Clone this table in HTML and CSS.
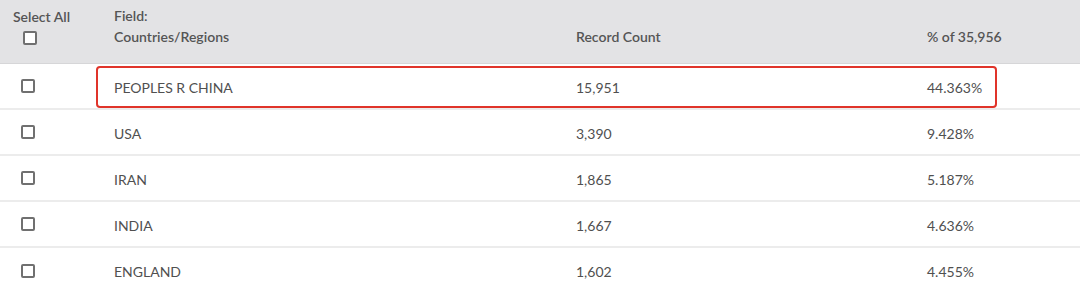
FILE: index.html
```html
<!DOCTYPE html>
<html>
<head>
<meta charset="utf-8">
<link rel="stylesheet" href="styles.css">
</head>
<body>
<div class="table">
  <div class="head">
    <div class="sel">
      <span class="sel-label">Select All</span>
      <span class="box head-box"></span>
    </div>
    <div class="main">
      <div class="c field"><span>Field:</span><span>Countries/Regions</span></div>
      <div class="c count">Record Count</div>
      <div class="c pct">% of 35,956</div>
    </div>
  </div>
  <div class="row">
    <div class="sel"><span class="box"></span></div>
    <div class="main hl">
      <div class="c field">PEOPLES R CHINA</div>
      <div class="c count">15,951</div>
      <div class="c pct">44.363%</div>
    </div>
  </div>
  <div class="row">
    <div class="sel"><span class="box"></span></div>
    <div class="main">
      <div class="c field">USA</div>
      <div class="c count">3,390</div>
      <div class="c pct">9.428%</div>
    </div>
  </div>
  <div class="row">
    <div class="sel"><span class="box"></span></div>
    <div class="main">
      <div class="c field">IRAN</div>
      <div class="c count">1,865</div>
      <div class="c pct">5.187%</div>
    </div>
  </div>
  <div class="row">
    <div class="sel"><span class="box"></span></div>
    <div class="main">
      <div class="c field">INDIA</div>
      <div class="c count">1,667</div>
      <div class="c pct">4.636%</div>
    </div>
  </div>
  <div class="row">
    <div class="sel"><span class="box"></span></div>
    <div class="main">
      <div class="c field">ENGLAND</div>
      <div class="c count">1,602</div>
      <div class="c pct">4.455%</div>
    </div>
  </div>
</div>
</body>
</html>
```

FILE: styles.css
```css
html, body {
  margin: 0;
  padding: 0;
  background: #ffffff;
}
body {
  font-family: Lato, "Liberation Sans", sans-serif;
  font-size: 14px;
  color: #505050;
  width: 1080px;
  height: 291px;
  overflow: hidden;
}
.table {
  display: flex;
  flex-direction: column;
}
.head {
  display: flex;
  height: 64px;
  background: #e3e3e5;
  border-bottom: 1px solid #d6d6d8;
  box-sizing: border-box;
}
.head .sel {
  display: flex;
  flex-direction: column;
  align-items: flex-start;
  padding: 9px 0 0 13px;
  box-sizing: border-box;
  gap: 6px;
}
.sel-label {
  font-weight: 600;
  color: #555;
  line-height: 16px;
  white-space: nowrap;
}
.head-box {
  margin-left: 10px;
}
.sel {
  width: 96px;
  flex: none;
  display: flex;
  align-items: center;
  padding-left: 21px;
  box-sizing: border-box;
}
.box {
  width: 14px;
  height: 14px;
  border: 2px solid #707070;
  border-radius: 2px;
  box-sizing: border-box;
  background: #fff;
  display: block;
}
.main {
  display: flex;
  width: 901px;
  flex: none;
  border: 2px solid transparent;
  border-radius: 4px;
  box-sizing: border-box;
}
.head .main {
  border: none;
  align-items: flex-end;
  padding-bottom: 16px;
  box-sizing: border-box;
}
.head .c {
  font-weight: 600;
  color: #555;
  line-height: 21px;
  white-space: nowrap;
}
.head .field {
  display: flex;
  flex-direction: column;
}
.c {
  padding-left: 16px;
  box-sizing: border-box;
  flex: none;
}
.head .c { padding-left: 18px; }
.field { width: 462px; }
.count { width: 351px; }
.pct { width: 84px; }
.row {
  display: flex;
  height: 46px;
  border-bottom: 2px solid #ececec;
  box-sizing: border-box;
}
.row .main {
  margin: 2px 0 0 0;
  height: 42px;
  align-items: center;
}
.row .main.hl {
  border-color: #e0342a;
}
.row:last-child {
  border-bottom: none;
}
```
